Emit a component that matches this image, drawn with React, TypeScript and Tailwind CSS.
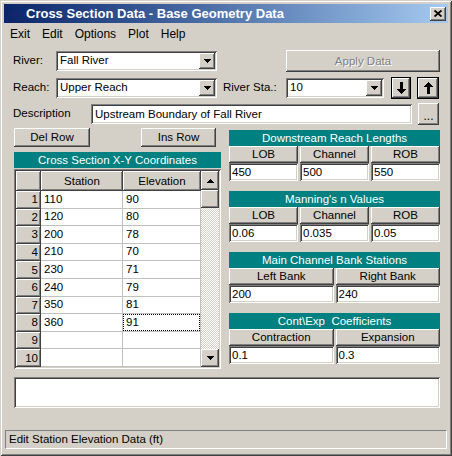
import React from "react";

const raised =
  "shadow-[inset_-1px_-1px_#404040,inset_1px_1px_#ffffff,inset_-2px_-2px_#808080,inset_2px_2px_#d4d0c8]";
const sunken =
  "shadow-[inset_1px_1px_#808080,inset_-1px_-1px_#ffffff,inset_2px_2px_#404040,inset_-2px_-2px_#d4d0c8]";

const Tri = ({ up = false }: { up?: boolean }) => (
  <svg width="7" height="4" viewBox="0 0 7 4" shapeRendering="crispEdges">
    <path d={up ? "M3.5 0L7 4H0z" : "M0 0h7L3.5 4z"} fill="#000" />
  </svg>
);

const Combo = ({ value, className }: { value: string; className: string }) => (
  <div className={`${sunken} bg-white h-[20px] flex items-center p-[2px] ${className}`}>
    <span className="flex-1 pl-[2px] truncate">{value}</span>
    <div className={`${raised} bg-[#d4d0c8] w-[16px] h-[16px] flex items-center justify-center`}>
      <Tri />
    </div>
  </div>
);

const ArrowBtn = ({ up = false, className }: { up?: boolean; className: string }) => (
  <div className={`border border-black h-[22px] ${className}`}>
    <div className={`${raised} bg-[#d4d0c8] w-full h-full flex items-center justify-center`}>
      <svg width="9" height="12" viewBox="0 0 9 12" shapeRendering="crispEdges">
        {up ? (
          <path d="M4.5 0L9 5H6v7H3V5H0z" fill="#000" />
        ) : (
          <path d="M3 0h3v7h3l-4.5 5L0 7h3z" fill="#000" />
        )}
      </svg>
    </div>
  </div>
);

const Group = ({ title, labels, values }: { title: string; labels: string[]; values: string[] }) => (
  <div className="flex flex-col">
    <div className="h-[16px] bg-[#008080] text-white text-center leading-[16px] whitespace-pre">{title}</div>
    <div className={`grid gap-x-[2px] ${labels.length === 3 ? "grid-cols-3" : "grid-cols-2"}`}>
      {labels.map((l, i) => (
        <div key={i} className={`${raised} bg-[#d4d0c8] h-[17px] text-center leading-[17px]`}>
          {l}
        </div>
      ))}
      {values.map((v, i) => (
        <div key={i} className={`${sunken} bg-white h-[18px] pl-[3px] leading-[18px]`}>
          {v}
        </div>
      ))}
    </div>
  </div>
);

const rows = [
  ["110", "90"],
  ["120", "80"],
  ["200", "78"],
  ["210", "70"],
  ["230", "71"],
  ["240", "79"],
  ["350", "81"],
  ["360", "91"],
  ["", ""],
  ["", ""],
];

export default function App() {
  return (
    <div className="w-[452px] h-[456px] bg-[#d4d0c8] font-['Liberation_Sans',Arial,sans-serif] text-[11.5px] text-black shadow-[inset_1px_1px_#d4d0c8,inset_-1px_-1px_#404040,inset_2px_2px_#ffffff,inset_-2px_-2px_#808080] pt-[4px] flex flex-col">
      {/* title bar */}
      <div className="mx-[4px] h-[19px] bg-linear-to-r from-[#0a246a] to-[#a6caf0] flex items-center">
        <svg width="16" height="14" viewBox="0 0 16 14" className="ml-[4px]">
          <path d="M1 6l3 4 3-3 3 3 4-5-4 2-3-3-3 3z" fill="#1a2470" />
        </svg>
        <span className="ml-[2px] text-white font-bold text-[13px]">
          Cross Section Data - Base Geometry Data
        </span>
        <div className={`${raised} ml-auto mr-[2px] w-[16px] h-[14px] bg-[#d4d0c8] flex items-center justify-center`}>
          <svg width="8" height="7" viewBox="0 0 8 7">
            <path d="M0.5 0.5l7 6M7.5 0.5l-7 6" stroke="#000" strokeWidth="1.8" />
          </svg>
        </div>
      </div>

      {/* menu */}
      <div className="mx-[4px] h-[22px] flex items-center text-[12px]">
        {["Exit", "Edit", "Options", "Plot", "Help"].map((m) => (
          <span key={m} className="px-[6px]">
            {m}
          </span>
        ))}
      </div>

      <div className="pl-[14px] pr-[12px] flex flex-col">
        {/* river row */}
        <div className="mt-[5px] h-[22px] flex items-center">
          <span className="w-[43px] -ml-px">River:</span>
          <Combo value="Fall River" className="w-[161px]" />
          <div
            className={`${raised} ml-auto w-[154px] h-[22px] bg-[#d4d0c8] text-center leading-[22px] text-[#808080] [text-shadow:1px_1px_0_#ffffff]`}
          >
            Apply Data
          </div>
        </div>

        {/* reach row */}
        <div className="mt-[5px] h-[22px] flex items-center">
          <span className="w-[43px] -ml-px">Reach:</span>
          <Combo value="Upper Reach" className="w-[161px]" />
          <span className="ml-[6px] w-[63px]">River Sta.:</span>
          <Combo value="10" className="w-[98px]" />
          <ArrowBtn className="ml-[7px] w-[20px]" />
          <ArrowBtn up className="ml-[6px] w-[22px]" />
        </div>

        {/* description row */}
        <div className="mt-[4px] h-[22px] flex items-center">
          <span className="w-[78px] -ml-px">Description</span>
          <div className={`${sunken} bg-white w-[321px] h-[20px] pl-[4px] leading-[20px]`}>
            Upstream Boundary of Fall River
          </div>
          <div
            className={`${raised} ml-[6px] w-[21px] h-[22px] bg-[#d4d0c8] text-center leading-[26px] text-[12px]`}
          >
            ...
          </div>
        </div>

        {/* main area */}
        <div className="mt-[3px] flex gap-[8px]">
          <div className="w-[207px] flex flex-col">
            <div className="flex h-[19px]">
              <div className={`${raised} bg-[#d4d0c8] w-[76px] text-center leading-[19px]`}>Del Row</div>
              <div className={`${raised} bg-[#d4d0c8] w-[75px] ml-[51px] text-center leading-[19px]`}>
                Ins Row
              </div>
            </div>
            <div className="mt-[5px] h-[16px] bg-[#008080] text-white text-center leading-[16px]">
              Cross Section X-Y Coordinates
            </div>
            <div className={`${sunken} mt-[1px] h-[200px] p-[2px] flex`}>
              <div className="w-[185px] grid grid-cols-[25px_82px_78px] grid-rows-[20px_repeat(10,minmax(0,1fr))]">
                <div className={`${raised} bg-[#d4d0c8]`} />
                <div className={`${raised} bg-[#d4d0c8] text-center leading-[20px]`}>Station</div>
                <div className={`${raised} bg-[#d4d0c8] text-center leading-[20px]`}>Elevation</div>
                {rows.map((r, i) => (
                  <React.Fragment key={i}>
                    <div className={`${raised} bg-[#d4d0c8] flex items-center justify-end pr-[3px]`}>{i + 1}</div>
                    <div className="bg-white border-r border-b border-[#c0c0c0] flex items-center pl-[3px]">
                      {r[0]}
                    </div>
                    <div className="bg-white border-r border-b border-[#c0c0c0] flex">
                      {i === 7 ? (
                        <div className="flex-1 border border-dotted border-black flex items-center pl-[2px]">
                          {r[1]}
                        </div>
                      ) : (
                        <div className="flex-1 flex items-center pl-[3px]">{r[1]}</div>
                      )}
                    </div>
                  </React.Fragment>
                ))}
              </div>
              <div className="w-[18px] flex flex-col">
                <div className={`${raised} bg-[#d4d0c8] h-[19px] flex items-center justify-center`}>
                  <Tri up />
                </div>
                <div className={`${raised} bg-[#d4d0c8] h-[18px]`} />
                <div className="flex-1 bg-[repeating-conic-gradient(#ffffff_0_25%,#d4d0c8_0_50%)] bg-[length:2px_2px]" />
                <div className={`${raised} bg-[#d4d0c8] h-[18px] flex items-center justify-center`}>
                  <Tri />
                </div>
              </div>
            </div>
          </div>

          <div className="w-[211px] mt-[2px] flex flex-col gap-[10px]">
            <Group title="Downstream Reach Lengths" labels={["LOB", "Channel", "ROB"]} values={["450", "500", "550"]} />
            <Group title="Manning's n Values" labels={["LOB", "Channel", "ROB"]} values={["0.06", "0.035", "0.05"]} />
            <Group title="Main Channel Bank Stations" labels={["Left Bank", "Right Bank"]} values={["200", "240"]} />
            <Group title="Cont\Exp  Coefficients" labels={["Contraction", "Expansion"]} values={["0.1", "0.3"]} />
          </div>
        </div>

        <div className={`${sunken} bg-white mt-[8px] h-[31px]`} />
      </div>

      {/* status bar */}
      <div className="mx-[5px] mt-[22px] h-[19px] border-t border-l border-[#808080] border-b-white border-r-white border-b border-r pl-[3px] leading-[17px]">
        Edit Station Elevation Data (ft)
      </div>
    </div>
  );
}
